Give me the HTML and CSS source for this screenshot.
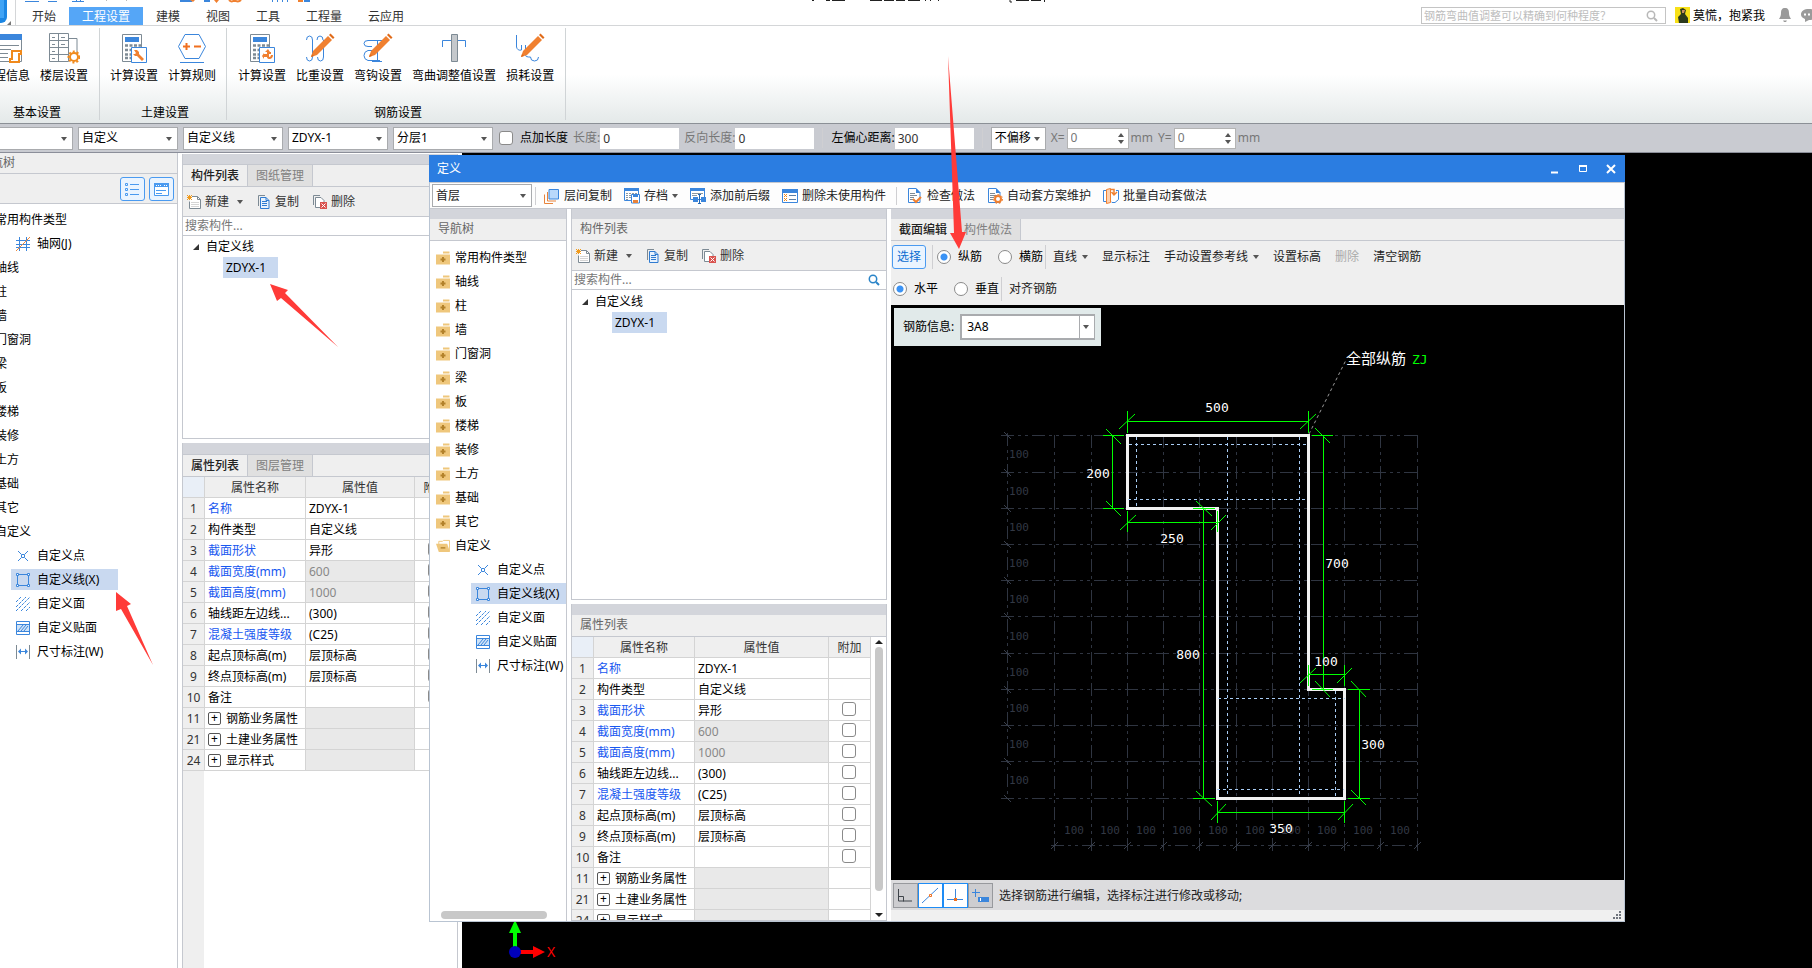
FILE: index.html
```html
<!DOCTYPE html>
<html lang="zh-CN">
<head>
  <meta charset="UTF-8">
  <title>定义</title>
  <link rel="stylesheet" href="styles.css">
</head>
<body>

  <!-- 图标库 -->
  <svg class="symbols" aria-hidden="true">
    <symbol id="i-new" viewBox="0 0 14 14">
      <path d="M5 1.500h5.500l3 3v9h-11v-7" fill="#fff" stroke="#7d8a94"/>
      <path d="M10.500 1.500v3h3" fill="none" stroke="#7d8a94"/>
      <path d="M4 7.500h8M4 9.500h8M4 11.500h8" stroke="#d5d5d5"/>
      <path d="M0 0l5 5M5 0L0 5M2.500 0v5M0 2.500h5" stroke="#f09a1c"/>
    </symbol>
    <symbol id="i-copy" viewBox="0 0 14 14">
      <path d="M1.500 11V.5H8" fill="none" stroke="#7d8a94"/>
      <path d="M3.500 2.500h5.500l3 3v8h-8.500z" fill="#e8f2fd" stroke="#2f7bd0"/>
      <path d="M9 2.500v3h3M5 6.500h5M5 8.500h5M5 10.500h5" fill="none" stroke="#2f7bd0"/>
    </symbol>
    <symbol id="i-del" viewBox="0 0 14 14">
      <path d="M.5 10V.5H7" fill="none" stroke="#7d8a94"/>
      <path d="M7 12.500H2.500v-10h5.500l3 3V7" fill="#fff" stroke="#7d8a94"/>
      <path d="M7 7h7v7H7z" fill="#d9534f"/>
      <path d="M8.500 8.500l4 4M12.500 8.500l-4 4" stroke="#fff"/>
    </symbol>
    <symbol id="i-folder" viewBox="0 0 14 13">
      <path d="M7 0h6.500v2H7zM0 3h14v10H0z" fill="#efc77c"/>
      <path d="M7 5.500v5M4.500 8h5" stroke="#b3822b" stroke-width="2"/>
    </symbol>
    <symbol id="i-open" viewBox="0 0 15 13">
      <path d="M3 5V1.500h4L8 .5h6.500V12" fill="#fff" stroke="#efc77c"/>
      <path d="M0 4h12l3 9H3z" fill="#efc77c"/>
      <path d="M5 8.500h5" stroke="#b3822b" stroke-width="1.500"/>
    </symbol>
    <symbol id="i-grid" viewBox="0 0 14 14">
      <path d="M3.500 0v14M10.500 0v14M0 3.500h14M0 7.500h14M0 10.500h14" stroke="#3b86dc"/>
      <path d="M0 14L14 0" stroke="#f08a3c"/>
    </symbol>
    <symbol id="i-point" viewBox="0 0 14 14">
      <path d="M2 2l3 3M12 2L9 5M2 12l3-3M12 12L9 9M5.500 5.500h3v3h-3z" fill="none" stroke="#3b86dc"/>
    </symbol>
    <symbol id="i-line" viewBox="0 0 14 14">
      <path d="M1.500 1.500h11v11h-11z" fill="none" stroke="#3b86dc"/>
      <path d="M.5.5h2v2h-2zM11.500.5h2v2h-2zM.5 11.500h2v2h-2zM11.500 11.500h2v2h-2z" fill="#fff" stroke="#3b86dc"/>
    </symbol>
    <symbol id="i-face" viewBox="0 0 14 14">
      <path d="M0 5l5-5M0 10L10 0M0 14L14 0M5 14l9-9M10 14l4-4" stroke="#3b86dc" stroke-dasharray="3 1"/>
    </symbol>
    <symbol id="i-veneer" viewBox="0 0 14 14">
      <path d="M.5.5h13v13H.5z" fill="#fff" stroke="#3b86dc"/>
      <path d="M1 4h12v6H1z" fill="#cfe3f8"/>
      <path d="M1 3.500h12M1 10.500h12M2 10l5-6M5 10l5-6M8 10l4-5" stroke="#3b86dc"/>
    </symbol>
    <symbol id="i-dim" viewBox="0 0 14 14">
      <path d="M.5 0v14M13.500 0v14" stroke="#7d8a94"/>
      <path d="M3 6.500h8" stroke="#3b86dc"/>
      <path d="M2 6.500l3-3v6zM12 6.500l-3-3v6z" fill="#3b86dc"/>
    </symbol>
    <symbol id="i-search" viewBox="0 0 12 12">
      <circle cx="5" cy="5" r="3.700" fill="none" stroke="currentColor" stroke-width="1.500"/>
      <path d="M8 8l3 3" stroke="currentColor" stroke-width="2"/>
    </symbol>
    <symbol id="i-calc" viewBox="0 0 30 32">
      <path d="M3.500 2.500h19v27h-19z" fill="#fff" stroke="#7d8a94"/>
      <path d="M6 5h14v5H6z" fill="#3b86dc"/>
      <path d="M6 13.500h16M6 18h9M6 22.500h6M6 26h6" stroke="#7d8a94" stroke-width="2.500" stroke-dasharray="3 1.500"/>
    </symbol>
    <symbol id="i-pencil" viewBox="0 0 32 32">
      <path d="M7 25l2-6L24 4l4 4-15 15z" fill="#f08030"/>
      <path d="M25 3l1.500-1.500 4 4L29 7zM7 25l1-3 2 2z" fill="#e06a18"/>
    </symbol>
  </svg>

  <!-- 顶部标签栏 -->
  <header class="top">
    <svg class="quick" width="320" height="26" aria-hidden="true">
      <path d="M0 0h7v17a6 6 0 0 1-6 6H0z" fill="#1b86e3"/>
      <path d="M0 0h4v18H0z" fill="#3fa3f5"/>
      <path d="M11 21v4H7z" fill="#777"/>
      <path d="M15.500 0v25" stroke="#d4d6d8"/>
      <path d="M25 1.500h14M48 1.500h9M72 1.500h12M76.500 0v2M80.500 0v2" stroke="#3b86dc"/>
      <path d="M106.500 0v1M126.500 0v1" stroke="#bbb"/>
      <path d="M180 1h12M204 1h6M304 1h6" stroke="#3b86dc" stroke-width="2"/>
      <path d="M190 0h5l-2 2zM214 0h5l-2.500 3z" fill="#f08030"/>
      <path d="M229 0q3 3 5 0q4 3 7 0M298 1h5" stroke="#f08030" fill="none" stroke-width="2"/>
      <path d="M272.500 0v2M277.500 0v2M282.500 0v2M287.500 0v2" stroke="#3b86dc"/>
    </svg>
    <nav class="tabs">
      <a href="#">开始</a>
      <a href="#" class="on">工程设置</a>
      <a href="#">建模</a>
      <a href="#">视图</a>
      <a href="#">工具</a>
      <a href="#">工程量</a>
      <a href="#">云应用</a>
    </nav>
    <svg class="caption" width="240" height="3" aria-hidden="true">
      <path d="M2 .5h2M16 .5h4M22 .5h13M60 .5h12M74 .5h10M86 .5h9M98 .5h12M115.500 0v1M120.500 0v1M128.500 0v1M200 0v2h2M206 .5h13M221 .5h10M234.500 0v2" fill="none" stroke="#222"/>
    </svg>
    <label class="ask">
      <input type="text" aria-label="搜索" placeholder="钢筋弯曲值调整可以精确到何种程度？">
      <svg width="12" height="12"><use href="#i-search"/></svg>
    </label>
    <svg class="avatar" width="15" height="16" aria-hidden="true">
      <path d="M0 0h15v16H0z" fill="#f7e018"/>
      <path d="M4 16l-1-6 3-3-1-5 3-1 3 2-1 4 3 4v5z" fill="#2c3a1c"/>
      <path d="M7 3l3 0-1 3-2 0z" fill="#c98f62"/>
    </svg>
    <span class="user">莫慌，抱紧我</span>
    <svg class="bell" width="12" height="15" aria-hidden="true">
      <path d="M6 0c3 0 4 2 4 5 0 3 1 4 2 6H0c1-2 2-3 2-6 0-3 1-5 4-5zM4 12.500h4L7 14H5z" fill="#9a9a9a"/>
    </svg>
    <svg class="chat" width="11" height="15" aria-hidden="true">
      <path d="M8 1c5 0 8 2 8 5.500S13 12 8 12l-4 2 0-3C1 10 0 8 0 6.500 0 3 3 1 8 1z" fill="#9a9a9a"/>
      <path d="M3 5.500h2v2H3zM7 5.500h2v2H7zM11 5.500h2v2h-2z" fill="#fff"/>
    </svg>
  </header>

  <!-- 功能区 -->
  <section class="ribbon">
    <div class="group first">
      <div class="tools">
        <button>
          <svg width="32" height="32"><path d="M2.500 2.500h29v27h-29z" fill="#fff" stroke="#7d8a94"/><path d="M2 2h30v6H2z" fill="#3b86dc"/><path d="M5 13.500h24M5 17.500h16M5 21.500h13M5 25.500h13" stroke="#7d8a94"/><path d="M22 19h9v3h-2v8h-9v-3h2z" fill="#fff" stroke="#f08a1c" stroke-width="2"/></svg>
          <span>工程信息</span>
        </button>
        <button>
          <svg width="32" height="32"><path d="M1.500 1.500h19v28h-19zM1 8.500h20M1 15.500h20M1 22.500h20M10.500 1v28M20 6.500h9V22" fill="none" stroke="#7d8a94"/><path d="M4 5.500h3M13 5.500h4M4 12.500h3M13 12.500h4M4 19.500h3M4 26.500h3" stroke="#7d8a94"/><circle cx="26" cy="25" r="4" fill="#fff" stroke="#f08a1c" stroke-width="2"/><circle cx="26" cy="25" r="5.500" fill="none" stroke="#f08a1c" stroke-width="2" stroke-dasharray="2 2"/></svg>
          <span>楼层设置</span>
        </button>
      </div>
      <p>基本设置</p>
    </div>
    <div class="group second">
      <div class="tools">
        <button>
          <svg width="30" height="32"><use href="#i-calc"/><path d="M12.500 15.500h15v15h-15z" fill="#fff" stroke="#3b86dc"/><path d="M15 18l3 0 2 2 0 2 5 5-2 2-5-5-2 0-2-2 2 0 1-1z" fill="#f08030"/></svg>
          <span>计算设置</span>
        </button>
        <button>
          <svg width="30" height="32"><path d="M8 2.500h14l6.500 12-6.500 12H8L1.500 14.500zM3 30.500h24" fill="none" stroke="#3b86dc"/><path d="M6 14.500h7M9.500 11v7M17 14.500h7" stroke="#f07020" stroke-width="2"/></svg>
          <span>计算规则</span>
        </button>
      </div>
      <p>土建设置</p>
    </div>
    <div class="group">
      <div class="tools">
        <button>
          <svg width="30" height="32"><use href="#i-calc"/><path d="M12.500 15.500h15v15h-15z" fill="#fff" stroke="#3b86dc"/><path d="M21 17l-3 3h2v2h-3v-1l-2 3 2 3v-2h3q0 2 3 2 3-1 3-4h-2q0 2-2 2v-3h2v-2h-1z" fill="#f08030"/></svg>
          <span>计算设置</span>
        </button>
        <button>
          <svg width="32" height="32"><path d="M2.500 8q0-4 3-4t3 4v17q0 4-3 4t-3-4M19 8q0-4-3-4M19.500 8v17q0 4-3 4t-3-4M13 8q0-4 3-4" fill="none" stroke="#3b86dc"/><use href="#i-pencil"/></svg>
          <span>比重设置</span>
        </button>
        <button>
          <svg width="32" height="32"><path d="M22 8.500H6q-4 0-4 3t4 3h4M12 18.500H6q-4 1-4 5t4 5h12M15.500 8v20M10 29.500h10" fill="none" stroke="#3b86dc"/><use href="#i-pencil"/></svg>
          <span>弯钩设置</span>
        </button>
        <button>
          <svg width="30" height="32"><path d="M3.500 15V8.500h23V15" fill="none" stroke="#3b86dc"/><path d="M12.500 2.500h6v27h-6z" fill="#c4c8cc" stroke="#7d8a94"/></svg>
          <span>弯曲调整值设置</span>
        </button>
        <button>
          <svg width="32" height="32"><path d="M2.500 3v12q1 4 5 3v-5M11.500 13v10q0 2 3 2h2q0 4 4 4 4 0 4-4" fill="none" stroke="#3b86dc"/><use href="#i-pencil"/></svg>
          <span>损耗设置</span>
        </button>
      </div>
      <p>钢筋设置</p>
    </div>
  </section>

  <!-- 选项栏 -->
  <form class="options">
    <span class="combo cut"><select aria-label="楼层"><option></option></select></span>
    <span class="combo"><select aria-label="类别"><option>自定义</option></select></span>
    <span class="combo"><select aria-label="类型"><option>自定义线</option></select></span>
    <span class="combo"><select aria-label="构件"><option>ZDYX-1</option></select></span>
    <span class="combo"><select aria-label="分层"><option>分层1</option></select></span>
    <label class="tick"><input type="checkbox">点加长度</label>
    <label class="field dim">长度:<input type="text" value="0"></label>
    <label class="field dim">反向长度:<input type="text" value="0"></label>
    <i class="bar"></i>
    <label class="field">左偏心距离:<input type="text" value="300"></label>
    <i class="bar"></i>
    <span class="combo small"><select aria-label="偏移"><option>不偏移</option></select></span>
    <label class="spin">X=<span><input type="text" value="0"></span>mm</label>
    <label class="spin">Y=<span><input type="text" value="0"></span>mm</label>
  </form>

  <!-- 工作区 -->
  <main class="work">
    <aside class="nav">
      <h2>导航树</h2>
      <div class="views">
        <button aria-label="列表"><svg width="15" height="15"><path d="M.5 1.500h2v2h-2zM.5 6.500h2v2h-2zM.5 11.500h2v2h-2zM5 2.500h9M5 7.500h9M5 12.500h9" fill="none" stroke="#4a9af0"/></svg></button>
        <button aria-label="窗口"><svg width="15" height="15"><path d="M.5 1.500h14v12H.5z" fill="#fff" stroke="#4a9af0"/><path d="M0 1h15v4H0z" fill="#4a9af0"/><path d="M2 3.500h5M10 3.500h3" stroke="#fff" stroke-dasharray="1 1"/><path d="M2 8.500h10M2 11.500h6" stroke="#4a9af0"/></svg></button>
      </div>
      <ul class="tree">
        <li>常用构件类型</li>
        <li class="sub"><svg><use href="#i-grid"/></svg>轴网(J)</li>
        <li>轴线</li>
        <li>柱</li>
        <li>墙</li>
        <li>门窗洞</li>
        <li>梁</li>
        <li>板</li>
        <li>楼梯</li>
        <li>装修</li>
        <li>土方</li>
        <li>基础</li>
        <li>其它</li>
        <li>自定义</li>
        <li class="sub"><svg><use href="#i-point"/></svg>自定义点</li>
        <li class="sub on"><svg><use href="#i-line"/></svg>自定义线(X)</li>
        <li class="sub"><svg><use href="#i-face"/></svg>自定义面</li>
        <li class="sub"><svg><use href="#i-veneer"/></svg>自定义贴面</li>
        <li class="sub"><svg><use href="#i-dim"/></svg>尺寸标注(W)</li>
      </ul>
    </aside>

    <div class="side">
      <section class="panel list">
        <div class="grip"></div>
        <div class="ptabs"><button class="on">构件列表</button><button>图纸管理</button></div>
        <div class="ltools">
          <button><svg><use href="#i-new"/></svg>新建<i class="caret"></i></button>
          <button><svg><use href="#i-copy"/></svg>复制</button>
          <button><svg><use href="#i-del"/></svg>删除</button>
        </div>
        <label class="find"><input type="text" aria-label="搜索构件" placeholder="搜索构件..."></label>
        <div class="items">
          <p><i class="fold"></i>自定义线</p>
          <p class="on">ZDYX-1</p>
        </div>
      </section>
      <section class="panel props">
        <div class="grip"></div>
        <div class="ptabs"><button class="on">属性列表</button><button>图层管理</button></div>
        <div class="sheet">
          <table>
            <colgroup><col class="c-no"><col class="c-name"><col><col class="c-add"></colgroup>
            <tr><th></th><th>属性名称</th><th>属性值</th><th>附加</th></tr>
            <tr><th>1</th><td class="key">名称</td><td>ZDYX-1</td><td></td></tr>
            <tr><th>2</th><td>构件类型</td><td>自定义线</td><td></td></tr>
            <tr><th>3</th><td class="key">截面形状</td><td>异形</td><td><input type="checkbox" aria-label="附加"></td></tr>
            <tr><th>4</th><td class="key">截面宽度(mm)</td><td class="off">600</td><td><input type="checkbox" aria-label="附加"></td></tr>
            <tr><th>5</th><td class="key">截面高度(mm)</td><td class="off">1000</td><td><input type="checkbox" aria-label="附加"></td></tr>
            <tr><th>6</th><td>轴线距左边线...</td><td>(300)</td><td><input type="checkbox" aria-label="附加"></td></tr>
            <tr><th>7</th><td class="key">混凝土强度等级</td><td>(C25)</td><td><input type="checkbox" aria-label="附加"></td></tr>
            <tr><th>8</th><td>起点顶标高(m)</td><td>层顶标高</td><td><input type="checkbox" aria-label="附加"></td></tr>
            <tr><th>9</th><td>终点顶标高(m)</td><td>层顶标高</td><td><input type="checkbox" aria-label="附加"></td></tr>
            <tr><th>10</th><td>备注</td><td></td><td><input type="checkbox" aria-label="附加"></td></tr>
            <tr><th>11</th><td><button class="plus">+</button>钢筋业务属性</td><td class="off"></td><td></td></tr>
            <tr><th>21</th><td><button class="plus">+</button>土建业务属性</td><td class="off"></td><td></td></tr>
            <tr><th>24</th><td><button class="plus">+</button>显示样式</td><td class="off"></td><td></td></tr>
          </table>
        </div>
      </section>
    </div>

    <div class="view">
      <!-- 坐标轴 -->
      <svg width="60" height="50">
        <path d="M11 34V10" stroke="#0f0" stroke-width="4"/><path d="M11 2l6 13H5z" fill="#0f0"/>
        <path d="M11 34h20" stroke="#f00" stroke-width="4"/><path d="M41 34l-12-6v12z" fill="#f00"/>
        <circle cx="11" cy="34" r="6" fill="#00b"/>
        <text class="axis" x="43" y="39">X</text>
      </svg>
    </div>
  </main>

  <!-- 定义窗口 -->
  <section class="dialog">
    <header class="title">
      <h1>定义</h1>
      <button aria-label="最小化"><svg width="10" height="10"><path d="M1 8.500h7" stroke="#fff" stroke-width="2"/></svg></button>
      <button aria-label="最大化"><svg width="10" height="10"><path d="M1.500 1.500h7v6h-7z" fill="none" stroke="#fff"/><path d="M1 2h8" stroke="#fff" stroke-width="2"/></svg></button>
      <button aria-label="关闭"><svg width="10" height="10"><path d="M1 1l8 8M9 1L1 9" stroke="#fff" stroke-width="2"/></svg></button>
    </header>

    <div class="dtools">
      <span class="combo"><select aria-label="楼层"><option>首层</option></select></span>
      <i class="bar"></i>
      <button><svg width="16" height="16"><path d="M5 1.500h9.500V11H5z" fill="#b8d8fb" stroke="#3b86dc"/><path d="M3.500 4v9H12M.5 6.500v9H9" fill="none" stroke="#e8833a"/></svg>层间复制</button>
      <button><svg width="16" height="16"><path d="M.5.5h14v12H.5z" fill="#fff" stroke="#3b86dc"/><path d="M0 0h15v3H0z" fill="#3b86dc"/><path d="M2 5.500h11M2 7.500h5M2 9.500h5M2 11.500h3" stroke="#8b98a2" stroke-dasharray="2 1"/><path d="M7.500 6.500h8v8.500h-8z" fill="#fff" stroke="#3b86dc"/><path d="M9 7h5v2H9z" fill="#3b86dc"/><path d="M9 12h5v3H9z" fill="#e8833a"/></svg>存档<i class="caret"></i></button>
      <button><svg width="16" height="16"><path d="M.5.5h14v11H.5z" fill="#fff" stroke="#3b86dc"/><path d="M0 0h15v3H0z" fill="#3b86dc"/><path d="M2 5.500h11M2 7.500h5" stroke="#8b98a2"/><path d="M3 9h5v5H3zM11 9h5v5h-5z" fill="#3b86dc"/><path d="M9.500 7v8M8 6.500h3M8 15.500h3" stroke="#2468b4"/></svg>添加前后缀</button>
      <button><svg width="16" height="16"><path d="M.5 1.500h15v13H.5z" fill="#fff" stroke="#3b86dc"/><path d="M0 1h16v4H0z" fill="#3b86dc"/><path d="M7 7.500h7M7 11.500h7" stroke="#5a7fa8"/><path d="M2 6l3 3M5 6L2 9M2 10l3 3M5 10l-3 3" stroke="#f08a1c"/></svg>删除未使用构件</button>
      <i class="bar wide"></i>
      <button><svg width="16" height="16"><path d="M1.500.5H9l4 4v10H1.500z" fill="#fff" stroke="#3b86dc"/><path d="M9 0l4.500 5H9z" fill="#3b86dc"/><path d="M3 5.500h5M3 7.500h7M3 9.500h4M3 11.500h3" stroke="#7d8a94"/><path d="M6 11l3 3 5-5" fill="none" stroke="#f08030" stroke-width="2"/></svg>检查做法</button>
      <button><svg width="16" height="16"><path d="M1.500.5H9l4 4v10H1.500z" fill="#fff" stroke="#3b86dc"/><path d="M9 0l4.500 5H9z" fill="#3b86dc"/><path d="M3 5.500h5M3 7.500h7M3 9.500h4M3 11.500h3" stroke="#7d8a94"/><circle cx="11" cy="11" r="3" fill="#fff" stroke="#f08030" stroke-width="2"/><circle cx="11" cy="11" r="4.500" fill="none" stroke="#f08030" stroke-dasharray="2 2"/></svg>自动套方案维护</button>
      <button><svg width="16" height="16"><path d="M3 2.500H.5v11H3M8 13.500l1 1h3l3.500-3v-9H13" fill="#fff" stroke="#3b86dc"/><path d="M3.500 1.500l4-1v14l-4 1z" fill="#fbd0b0" stroke="#f08030"/><path d="M8 1.500h3V6M8.500 4l2.500 3 3-3" fill="none" stroke="#f08030" stroke-width="1.500"/></svg>批量自动套做法</button>
    </div>

    <div class="dbody">
      <section class="dnav">
        <div class="grip"></div>
        <h2>导航树</h2>
        <ul class="tree">
          <li><svg><use href="#i-folder"/></svg>常用构件类型</li>
          <li><svg><use href="#i-folder"/></svg>轴线</li>
          <li><svg><use href="#i-folder"/></svg>柱</li>
          <li><svg><use href="#i-folder"/></svg>墙</li>
          <li><svg><use href="#i-folder"/></svg>门窗洞</li>
          <li><svg><use href="#i-folder"/></svg>梁</li>
          <li><svg><use href="#i-folder"/></svg>板</li>
          <li><svg><use href="#i-folder"/></svg>楼梯</li>
          <li><svg><use href="#i-folder"/></svg>装修</li>
          <li><svg><use href="#i-folder"/></svg>土方</li>
          <li><svg><use href="#i-folder"/></svg>基础</li>
          <li><svg><use href="#i-folder"/></svg>其它</li>
          <li><svg><use href="#i-open"/></svg>自定义</li>
          <li class="sub"><svg><use href="#i-point"/></svg>自定义点</li>
          <li class="sub on"><svg><use href="#i-line"/></svg>自定义线(X)</li>
          <li class="sub"><svg><use href="#i-face"/></svg>自定义面</li>
          <li class="sub"><svg><use href="#i-veneer"/></svg>自定义贴面</li>
          <li class="sub"><svg><use href="#i-dim"/></svg>尺寸标注(W)</li>
        </ul>
        <div class="hscroll"></div>
      </section>

      <div class="dmid">
        <section class="panel list">
          <div class="grip"></div>
          <h2>构件列表</h2>
          <div class="ltools">
            <button><svg><use href="#i-new"/></svg>新建<i class="caret"></i></button>
            <button><svg><use href="#i-copy"/></svg>复制</button>
            <button><svg><use href="#i-del"/></svg>删除</button>
          </div>
          <label class="find"><input type="text" aria-label="搜索构件" placeholder="搜索构件..."><svg width="12" height="12"><use href="#i-search"/></svg></label>
          <div class="items">
            <p><i class="fold"></i>自定义线</p>
            <p class="on">ZDYX-1</p>
          </div>
        </section>
        <section class="panel props">
          <div class="grip"></div>
          <h2>属性列表</h2>
          <div class="sheet">
            <table>
              <colgroup><col class="c-no"><col class="c-name"><col><col class="c-add"></colgroup>
              <tr><th></th><th>属性名称</th><th>属性值</th><th>附加</th></tr>
              <tr><th>1</th><td class="key">名称</td><td>ZDYX-1</td><td></td></tr>
              <tr><th>2</th><td>构件类型</td><td>自定义线</td><td></td></tr>
              <tr><th>3</th><td class="key">截面形状</td><td>异形</td><td><input type="checkbox" aria-label="附加"></td></tr>
              <tr><th>4</th><td class="key">截面宽度(mm)</td><td class="off">600</td><td><input type="checkbox" aria-label="附加"></td></tr>
              <tr><th>5</th><td class="key">截面高度(mm)</td><td class="off">1000</td><td><input type="checkbox" aria-label="附加"></td></tr>
              <tr><th>6</th><td>轴线距左边线...</td><td>(300)</td><td><input type="checkbox" aria-label="附加"></td></tr>
              <tr><th>7</th><td class="key">混凝土强度等级</td><td>(C25)</td><td><input type="checkbox" aria-label="附加"></td></tr>
              <tr><th>8</th><td>起点顶标高(m)</td><td>层顶标高</td><td><input type="checkbox" aria-label="附加"></td></tr>
              <tr><th>9</th><td>终点顶标高(m)</td><td>层顶标高</td><td><input type="checkbox" aria-label="附加"></td></tr>
              <tr><th>10</th><td>备注</td><td></td><td><input type="checkbox" aria-label="附加"></td></tr>
              <tr><th>11</th><td><button class="plus">+</button>钢筋业务属性</td><td class="off"></td><td></td></tr>
              <tr><th>21</th><td><button class="plus">+</button>土建业务属性</td><td class="off"></td><td></td></tr>
              <tr><th>24</th><td><button class="plus">+</button>显示样式</td><td class="off"></td><td></td></tr>
            </table>
            <div class="vscroll"><i class="up"></i><b></b><i class="down"></i></div>
          </div>
        </section>
      </div>

      <section class="editor">
        <div class="grip"></div>
        <div class="ptabs"><button class="on">截面编辑</button><button>构件做法</button></div>
        <form class="etools">
          <div class="row">
            <button type="button" class="pick">选择</button>
            <i class="bar"></i>
            <label><input type="radio" name="rebar" checked>纵筋</label>
            <label><input type="radio" name="rebar">横筋</label>
            <i class="bar"></i>
            <button type="button">直线<i class="caret"></i></button>
            <button type="button">显示标注</button>
            <button type="button">手动设置参考线<i class="caret"></i></button>
            <button type="button">设置标高</button>
            <button type="button" disabled>删除</button>
            <button type="button">清空钢筋</button>
          </div>
          <div class="row second">
            <label><input type="radio" name="dir" checked>水平</label>
            <label><input type="radio" name="dir">垂直</label>
            <i class="bar"></i>
            <button type="button">对齐钢筋</button>
          </div>
        </form>

        <div class="cad">
          <!-- 截面图 -->
          <svg class="draw" width="733" height="575" viewBox="891 305 733 575">
            <!-- 网格 -->
            <g class="mesh">
              <path d="M1001 435.500H1417M1001 472.500H1417M1001 508.500H1417M1001 544.500H1417M1001 580.500H1417M1001 616.500H1417M1001 653.500H1417M1001 689.500H1417M1001 725.500H1417M1001 761.500H1417M1001 798.500H1417M1051 845.500H1417"/>
              <path d="M1007.500 433V798M1054.500 435V852M1091.500 435V852M1127.500 435V852M1163.500 435V852M1199.500 435V852M1236.500 435V852M1272.500 435V852M1308.500 435V852M1344.500 435V852M1380.500 435V852M1417.500 435V852"/>
            </g>
            <path class="tick-mark" d="M1004 432l7 7M1004 469l7 7M1004 505l7 7M1004 541l7 7M1004 577l7 7M1004 613l7 7M1004 650l7 7M1004 686l7 7M1004 722l7 7M1004 758l7 7M1004 795l7 7M1051 849l7-7M1088 849l7-7M1124 849l7-7M1160 849l7-7M1196 849l7-7M1233 849l7-7M1269 849l7-7M1305 849l7-7M1341 849l7-7M1377 849l7-7M1414 849l7-7"/>
            <g class="scale">
              <text x="1019" y="458">100</text>
              <text x="1019" y="495">100</text>
              <text x="1019" y="531">100</text>
              <text x="1019" y="567">100</text>
              <text x="1019" y="603">100</text>
              <text x="1019" y="640">100</text>
              <text x="1019" y="676">100</text>
              <text x="1019" y="712">100</text>
              <text x="1019" y="748">100</text>
              <text x="1019" y="784">100</text>
              <text x="1074" y="834">100</text>
              <text x="1110" y="834">100</text>
              <text x="1146" y="834">100</text>
              <text x="1182" y="834">100</text>
              <text x="1218" y="834">100</text>
              <text x="1255" y="834">100</text>
              <text x="1291" y="834">100</text>
              <text x="1327" y="834">100</text>
              <text x="1363" y="834">100</text>
              <text x="1400" y="834">100</text>
            </g>
            <!-- 轮廓 -->
            <path class="outline" d="M1127.500 435.500H1308.500V689.500H1344.500V798.500H1217.500V508.500H1127.500z"/>
            <path class="cover" d="M1136.500 437V507M1227.500 437V797M1299.500 437V797M1335.500 691V797M1129 444.500H1309M1128 499.500H1308M1218 698.500H1345M1217 789.500H1344"/>
            <!-- 尺寸线 -->
            <g class="dims">
              <path d="M1127 421.500H1309M1127.500 411V433M1308.500 411V433M1119 429l16-15M1300 429l16-15"/>
              <path d="M1112.500 435V508M1103 435.500H1124M1103 508.500H1124M1106 429l15 15M1106 501l15 15"/>
              <path d="M1127 522.500H1218M1127.500 511V532M1217.500 511V532M1120 530l16-15M1211 530l15-15"/>
              <path d="M1203.500 508V798M1193 508.500H1215M1193 798.500H1215M1196 501l16 15M1196 791l16 15"/>
              <path d="M1323.500 435V689M1312 435.500H1333M1312 689.500H1333M1315 428l15 15M1315 681l15 16"/>
              <path d="M1308 674.500H1344M1308.500 665V686M1344.500 665V686M1300 683l16-15M1337 683l15-15"/>
              <path d="M1359.500 689V798M1348 689.500H1370M1348 798.500H1370M1351 681l15 16M1351 790l15 15"/>
              <path d="M1217 812.500H1344M1217.500 801V823M1344.500 801V823M1211 820l15-16M1338 820l15-16"/>
            </g>
            <g class="nums">
              <text x="1217" y="412">500</text>
              <text x="1098" y="478">200</text>
              <text x="1172" y="543">250</text>
              <text x="1337" y="568">700</text>
              <text x="1188" y="659">800</text>
              <text x="1326" y="666">100</text>
              <text x="1373" y="749">300</text>
              <text x="1281" y="833">350</text>
            </g>
            <path class="leader" d="M1309 434L1346 360"/>
            <text class="note" x="1346" y="364">全部纵筋</text>
            <text class="mark" x="1412" y="364">ZJ</text>
          </svg>
          <label class="info">钢筋信息:<span class="combo"><select><option>3A8</option></select></span></label>
        </div>

        <footer class="status">
          <button aria-label="正交"><svg width="23" height="23"><path d="M4.500 5v12H18M4.500 12.500h5v5" fill="none" stroke="#3f444a"/></svg></button>
          <button class="on" aria-label="中点"><svg width="23" height="23"><path d="M3 19L19 4" stroke="#3b86dc"/><path d="M10.500 10.500h2v2h-2z" fill="#fff" stroke="#f07020"/></svg></button>
          <button class="on" aria-label="垂足"><svg width="23" height="23"><path d="M3 15.500h16M11.500 5v10" stroke="#3b86dc"/><path d="M10 14h3v3h-3z" fill="#f07020"/></svg></button>
          <button aria-label="动态输入"><svg width="23" height="23"><path d="M6.500 5v8M3 8.500h8" stroke="#3b86dc"/><path d="M9 13h11v5H9z" fill="#3b86dc"/><path d="M11.500 14v3" stroke="#fff"/></svg></button>
          <span>选择钢筋进行编辑，选择标注进行修改或移动;</span>
        </footer>
        <div class="foot"><svg width="9" height="9"><path d="M6 0h2v2H6zM3 3h2v2H3zM6 3h2v2H6zM0 6h2v2H0zM3 6h2v2H3zM6 6h2v2H6z" fill="#70757d"/></svg></div>
      </section>
    </div>
  </section>

  <!-- 红色箭头 -->
  <svg class="arrows" width="1812" height="968" aria-hidden="true">
    <path d="M270 284L288 290 285 293 338 347 281 298 277 301z"/>
    <path d="M116 592L131 604 127 606 153 665 121 609 116 611z"/>
    <path d="M948 56L962 232 966 232 959 249 950 233 954 233z"/>
  </svg>
</body>
</html>
```

FILE: styles.css
```css
*{
  box-sizing: border-box;
}

html, body{
  margin: 0;
  padding: 0;
  height: 100%;
}

body{
  position: relative;
  display: flex;
  flex-direction: column;
  overflow: hidden;
  background: #fff;
  color: #000;
  font: 12px/20px "Noto Sans", "Noto Sans CJK SC", sans-serif;
  white-space: nowrap;
}

/* 初始化 */
h1, h2, p, ul{
  margin: 0;
  padding: 0;
  font-size: 12px;
  font-weight: normal;
  list-style: none;
}
button, input, select{
  margin: 0;
  padding: 0;
  border: none;
  background: transparent;
  color: inherit;
  font: inherit;
}
a{
  color: inherit;
  text-decoration: none;
}
svg{
  display: block;
  flex: none;
}
.symbols{
  position: absolute;
  width: 0;
  height: 0;
}

/* 公用小部件 */
.caret{
  width: 0;
  height: 0;
  border: 3px solid transparent;
  border-top: 4px solid #555;
  border-bottom: none;
}
.bar{
  flex: none;
  width: 1px;
  height: 24px;
  background: #cfcfd2;
}
.combo{
  position: relative;
  flex: none;
  width: 100px;
  height: 23px;
  border: 1px solid #a9abae;
  background: #fff;
}
.combo::after{
  content: '';
  position: absolute;
  top: 9px;
  right: 5px;
  border: 3px solid transparent;
  border-top: 4px solid #555;
  border-bottom: none;
}
.combo select{
  display: block;
  width: 100%;
  height: 100%;
  padding-left: 3px;
  appearance: none;
}
input[type=checkbox]{
  display: block;
  width: 14px;
  height: 14px;
  border: 1px solid #8a8a8a;
  border-radius: 3px;
  background: #fff;
  appearance: none;
}
input[type=radio]{
  width: 14px;
  height: 14px;
  border: 1px solid #8a8a8a;
  border-radius: 50%;
  background: #fff;
  appearance: none;
}
input[type=radio]:checked{
  background: radial-gradient(circle, #3b93f5 3px, #fff 4px);
}
.grip{
  flex: none;
  height: 10px;
  background: #d3d5db;
}

/* 顶部 */
.top{
  display: flex;
  flex: none;
  align-items: flex-start;
  height: 26px;
  border-bottom: 1px solid #d4d6d8;
  background: #fff;
}
.quick{
  margin-right: -301px;
}
.tabs{
  display: flex;
  padding-top: 7px;
}
.tabs a{
  position: relative;
  height: 18px;
  padding: 0 13px;
  color: #333;
}
.tabs .on{
  background: #55a6f7;
  color: #fff;
}
.caption{
  margin-left: 393px;
}
.ask{
  display: flex;
  align-items: center;
  width: 245px;
  height: 17px;
  margin: 7px 9px 0 auto;
  padding: 0 7px 0 2px;
  border: 1px solid #c4c4c4;
  color: #b8b8b8;
}
.ask input{
  flex: 1;
  min-width: 0;
  height: 15px;
  font-size: 11px;
}
.ask input::placeholder{
  color: #bdbdbd;
}
.avatar{
  margin-top: 7px;
}
.user{
  width: 86px;
  padding: 6px 0 0 3px;
}
.bell, .chat{
  margin-top: 8px;
}
.bell{
  margin: 8px 10px 0 3px;
}

/* 功能区 */
.ribbon{
  display: flex;
  flex: none;
  height: 98px;
  border-bottom: 1px solid #8b9096;
  background: linear-gradient(to bottom, #fff 50%, #e4e9e9);
}
.group{
  height: 92px;
  margin-top: 2px;
  padding: 4px 11px 0;
  border-right: 1px solid #d0d4d6;
}
.group.second{
  padding: 4px 10px 0;
}
.group.first{
  margin-left: -29px;
}
.tools{
  display: flex;
  gap: 10px;
}
.tools button{
  display: flex;
  flex-direction: column;
  align-items: center;
}
.tools span{
  margin-top: 2px;
}
.group p{
  margin-top: 17px;
  padding-left: 4px;
  text-align: center;
}

/* 选项栏 */
.options{
  display: flex;
  flex: none;
  align-items: center;
  gap: 5px;
  height: 29px;
  border-bottom: 1px solid #8b8e99;
  background: #c9cbd1;
}
.options .cut{
  margin-left: -27px;
}
.options .small{
  width: 55px;
}
.options .bar{
  height: 20px;
  margin: 0 3px;
}
.options label{
  display: flex;
  align-items: center;
}
.options .tick{
  gap: 7px;
  padding-left: 1px;
}
.field input{
  width: 79px;
  height: 21px;
  padding-left: 3px;
  background: #fff;
  color: #333;
}
.dim{
  color: #777;
}
.spin{
  gap: 2px;
  color: #777;
}
.spin span{
  position: relative;
  height: 21px;
  border: 1px solid #b4b4b4;
  background: #fff;
}
.spin input{
  display: block;
  width: 60px;
  height: 19px;
  padding-left: 3px;
}
.spin span::before, .spin span::after{
  content: '';
  position: absolute;
  right: 4px;
  border: 3px solid transparent;
}
.spin span::before{
  top: 4px;
  border-top: none;
  border-bottom: 4px solid #555;
}
.spin span::after{
  bottom: 4px;
  border-bottom: none;
  border-top: 4px solid #555;
}

/* 工作区 */
.work{
  display: flex;
  flex: 1;
  min-height: 0;
}
.nav{
  flex: none;
  width: 178px;
  overflow: hidden;
  border-right: 1px solid #c5c8cf;
}
.nav h2{
  height: 21px;
  border-bottom: 1px solid #c5c8cf;
  background: #efefef;
  color: #666;
  text-indent: -21px;
}
.views{
  display: flex;
  justify-content: flex-end;
  gap: 4px;
  height: 30px;
  padding: 3px 3px 0 0;
  border-bottom: 1px solid #c5c8cf;
  background: #efefef;
}
.views button{
  display: flex;
  align-items: center;
  justify-content: center;
  width: 25px;
  height: 24px;
  border: 1px solid #4a9af0;
  border-radius: 3px;
  background: #eaf4ff;
}

/* 导航树 */
.tree li{
  display: flex;
  align-items: center;
  height: 21px;
  margin-bottom: 3px;
}
.tree svg{
  width: 14px;
  height: 14px;
}
.nav .tree{
  padding-top: 5px;
}
.nav .tree li{
  margin-left: -5px;
}
.nav .tree .sub{
  gap: 7px;
  width: 107px;
  margin-left: 11px;
  padding-left: 5px;
}
.tree .on, .tree .sub.on{
  background: #c9d9f0;
}

/* 构件/属性面板 */
.side{
  display: flex;
  flex: none;
  flex-direction: column;
  gap: 4px;
  width: 276px;
  margin: 1px 4px 0;
}
.panel{
  display: flex;
  flex-direction: column;
  min-height: 0;
  border: 1px solid #c5c8cf;
  border-top: none;
  background: #fff;
}
.side .list{
  flex: 0 0 285px;
}
.side .props{
  flex: 1;
  border-bottom: none;
}
.ptabs{
  display: flex;
  flex: none;
  height: 23px;
  border-top: 1px solid #c5c8cf;
  border-bottom: 1px solid #c5c8cf;
  background: #efefef;
}
.ptabs button{
  width: 65px;
  border-right: 1px solid #c5c8cf;
  background: #e0e0e0;
  color: #808080;
}
.ptabs .on{
  background: #efefef;
  color: #222;
  font-weight: 500;
}
.ltools{
  display: flex;
  flex: none;
  align-items: center;
  gap: 14px;
  height: 30px;
  padding-left: 4px;
  border-bottom: 1px solid #c5c8cf;
  background: #efefef;
  color: #333;
}
.ltools button{
  display: flex;
  align-items: center;
  gap: 4px;
}
.ltools svg{
  width: 14px;
  height: 14px;
}
.ltools .caret{
  margin-left: 4px;
}
.find{
  display: flex;
  flex: none;
  align-items: center;
  height: 19px;
  padding: 0 6px 0 2px;
  border-bottom: 1px solid #c5c8cf;
  color: #2a84c8;
}
.find input{
  flex: 1;
  min-width: 0;
  height: 18px;
}
.find input::placeholder{
  color: #777;
}
.dmid .items{
  padding-top: 1px;
}
.items p{
  display: flex;
  align-items: center;
  height: 21px;
  padding-left: 10px;
}
.fold{
  width: 0;
  height: 0;
  margin-right: 7px;
  border-left: 6px solid transparent;
  border-bottom: 6px solid #333;
}
.items .on{
  width: 55px;
  margin-left: 40px;
  padding-left: 3px;
  background: #c9d9f0;
}

/* 属性表 */
.props .grip{
  height: 11px;
}
.sheet{
  display: flex;
  flex: 1;
  align-items: flex-start;
  min-height: 0;
  overflow: hidden;
  background: linear-gradient(to right, #efefef 21px, #fff 21px);
}
table{
  flex: 1;
  min-width: 0;
  table-layout: fixed;
  border-spacing: 0;
}
th, td{
  height: 21px;
  padding: 1px 0 0;
  border-right: 1px solid #d4d4d4;
  border-bottom: 1px solid #d4d4d4;
  line-height: 19px;
  text-align: left;
  font-weight: normal;
}
th{
  background: #efefef;
  color: #333;
  text-align: center;
}
tr:first-child th:first-child{
  background: #e9eff7;
}
td{
  padding-left: 3px;
  background: #fff;
}
.c-no{
  width: 22px;
}
.c-name{
  width: 101px;
}
.c-add{
  width: 42px;
}
.key{
  color: #1757f0;
}
.off{
  background: #e9e9e9;
  color: #888;
}
td input[type=checkbox]{
  margin: 0 auto 3px 10px;
}
.plus{
  width: 13px;
  height: 13px;
  margin-right: 5px;
  border: 1px solid #555;
  border-radius: 2px;
  line-height: 10px;
  vertical-align: 1px;
}

/* 模型视图 */
.view{
  display: flex;
  flex: 1;
  align-items: flex-end;
  min-width: 0;
  padding-left: 42px;
  background: #000;
}
.axis{
  fill: #f00;
  font-size: 14px;
}

/* 定义窗口 */
.dialog{
  position: absolute;
  top: 155px;
  right: 187px;
  bottom: 46px;
  left: 429px;
  display: flex;
  flex-direction: column;
  border: 1px solid #b9c4d2;
  border-top: none;
  background: #fff;
}
.title{
  display: flex;
  flex: none;
  align-items: center;
  gap: 18px;
  height: 27px;
  margin: 0 -1px;
  padding: 0 9px 0 8px;
  background: #2b7de1;
  color: #fff;
}
.title h1{
  flex: 1;
}
.dtools{
  display: flex;
  flex: none;
  align-items: center;
  gap: 2px;
  height: 27px;
  padding-left: 2px;
  border-top: 1px solid #c5c8cf;
  border-bottom: 1px solid #c5c8cf;
  background: #fdfdfd;
  color: #222;
}
.dtools button{
  display: flex;
  align-items: center;
  gap: 4px;
  padding: 0 5px;
}
.dtools .bar{
  height: 18px;
  margin: 0 1px;
}
.dtools .wide{
  margin: 0 3px;
}
.dbody{
  display: flex;
  flex: 1;
  min-height: 0;
}
.dialog h2{
  flex: none;
  height: 22px;
  padding-left: 8px;
  border-bottom: 1px solid #c5c8cf;
  background: #efefef;
  color: #666;
}
.dnav{
  display: flex;
  flex: none;
  flex-direction: column;
  width: 137px;
  margin-right: 4px;
  border-right: 1px solid #c5c8cf;
}
.dnav .tree{
  flex: 1;
  padding-top: 6px;
}
.dnav .tree li{
  gap: 5px;
  padding-left: 6px;
}
.dnav .tree .sub{
  gap: 7px;
  margin-left: 41px;
  padding-left: 5px;
}
.hscroll{
  width: 106px;
  height: 8px;
  margin: 0 0 2px 11px;
  border-radius: 4px;
  background: #c8c8c8;
}
.dmid{
  display: flex;
  flex: none;
  flex-direction: column;
  gap: 4px;
  width: 316px;
  margin-right: 4px;
}
.dmid .list{
  flex: 1;
}
.dmid .props{
  flex: 0 0 317px;
}
.vscroll{
  display: flex;
  flex: none;
  flex-direction: column;
  align-items: center;
  gap: 3px;
  width: 15px;
  height: 100%;
  padding: 3px 0;
  background: #fff;
}
.vscroll b{
  width: 8px;
  height: 244px;
  margin-bottom: auto;
  border-radius: 4px;
  background: #c8c8c8;
}
.up, .down{
  border: 4px solid transparent;
}
.up{
  border-top: none;
  border-bottom: 4px solid #222;
}
.down{
  border-bottom: none;
  border-top: 4px solid #222;
}

/* 截面编辑 */
.editor{
  display: flex;
  flex: 1;
  flex-direction: column;
  min-width: 0;
}
.editor .ptabs{
  height: 22px;
  border-top: none;
}
.etools{
  flex: none;
  height: 64px;
  background: #efefef;
  color: #222;
}
.row{
  display: flex;
  align-items: center;
  height: 32px;
}
.row.second{
  margin-left: -2px;
}
.row label{
  display: flex;
  align-items: center;
  gap: 7px;
  padding: 0 12px 0 4px;
  color: #000;
}
.row label + .bar{
  margin-left: -10px;
}
.row button{
  display: flex;
  align-items: center;
  gap: 5px;
  padding: 0 7px;
}
.row button:disabled{
  color: #aaa;
}
.row .pick{
  height: 24px;
  margin: 0 6px 0 1px;
  padding: 0 4px;
  border: 1px solid #4a9af0;
  border-radius: 3px;
  background: #eaf4ff;
  color: #0a6cd0;
}
.cad{
  position: relative;
  flex: 1;
  min-height: 0;
  overflow: hidden;
  background: #000;
}
.draw{
  position: absolute;
  top: 0;
  left: 0;
}
.info{
  position: absolute;
  top: 3px;
  left: 3px;
  display: flex;
  align-items: center;
  gap: 6px;
  height: 38px;
  padding: 0 6px 0 9px;
  background: #e1eaea;
}
.info .combo{
  width: 135px;
  height: 26px;
  border-width: 2px 1px 2px 2px;
}
.info .combo::before{
  content: '';
  position: absolute;
  top: 0;
  right: 14px;
  width: 1px;
  height: 22px;
  background: #a9abae;
}
.info select{
  padding-left: 5px;
}

/* 图形线条 */
.mesh{
  fill: none;
  stroke: #2f3541;
  stroke-dasharray: 13 4 3 4 3 4;
}
.tick-mark{
  fill: none;
  stroke: #3a404c;
}
.scale{
  fill: #323844;
  font: 11px "DejaVu Sans Mono", monospace;
  text-anchor: middle;
}
.outline{
  fill: none;
  stroke: #f2f2f2;
  stroke-width: 3;
}
.cover{
  fill: none;
  stroke: #a9cdf5;
  stroke-dasharray: 3 3;
}
.dims{
  fill: none;
  stroke: #0f0;
}
.nums{
  fill: #fff;
  font: 13px "DejaVu Sans Mono", monospace;
  text-anchor: middle;
}
.leader{
  stroke: #999;
  stroke-dasharray: 3 3;
}
.note{
  fill: #fff;
  font-size: 15px;
}
.mark{
  fill: #0f0;
  font: 13px "DejaVu Sans Mono", monospace;
}

/* 状态栏 */
.status{
  display: flex;
  flex: none;
  align-items: center;
  height: 30px;
  padding-left: 2px;
  background: #dcdcde;
  color: #222;
}
.status button{
  width: 25px;
  height: 25px;
  border: 1px solid #97999d;
  background: #cdcdd0;
}
.status .on{
  border-color: #1e8cf5;
  background: #fff;
}
.status span{
  padding: 2px 0 0 6px;
}
.foot{
  display: flex;
  flex: none;
  justify-content: flex-end;
  height: 11px;
  padding: 1px 2px 0 0;
  background: #f0f0f0;
}

/* 箭头 */
.arrows{
  position: absolute;
  top: 0;
  left: 0;
  fill: #ff3b38;
  pointer-events: none;
}
```
